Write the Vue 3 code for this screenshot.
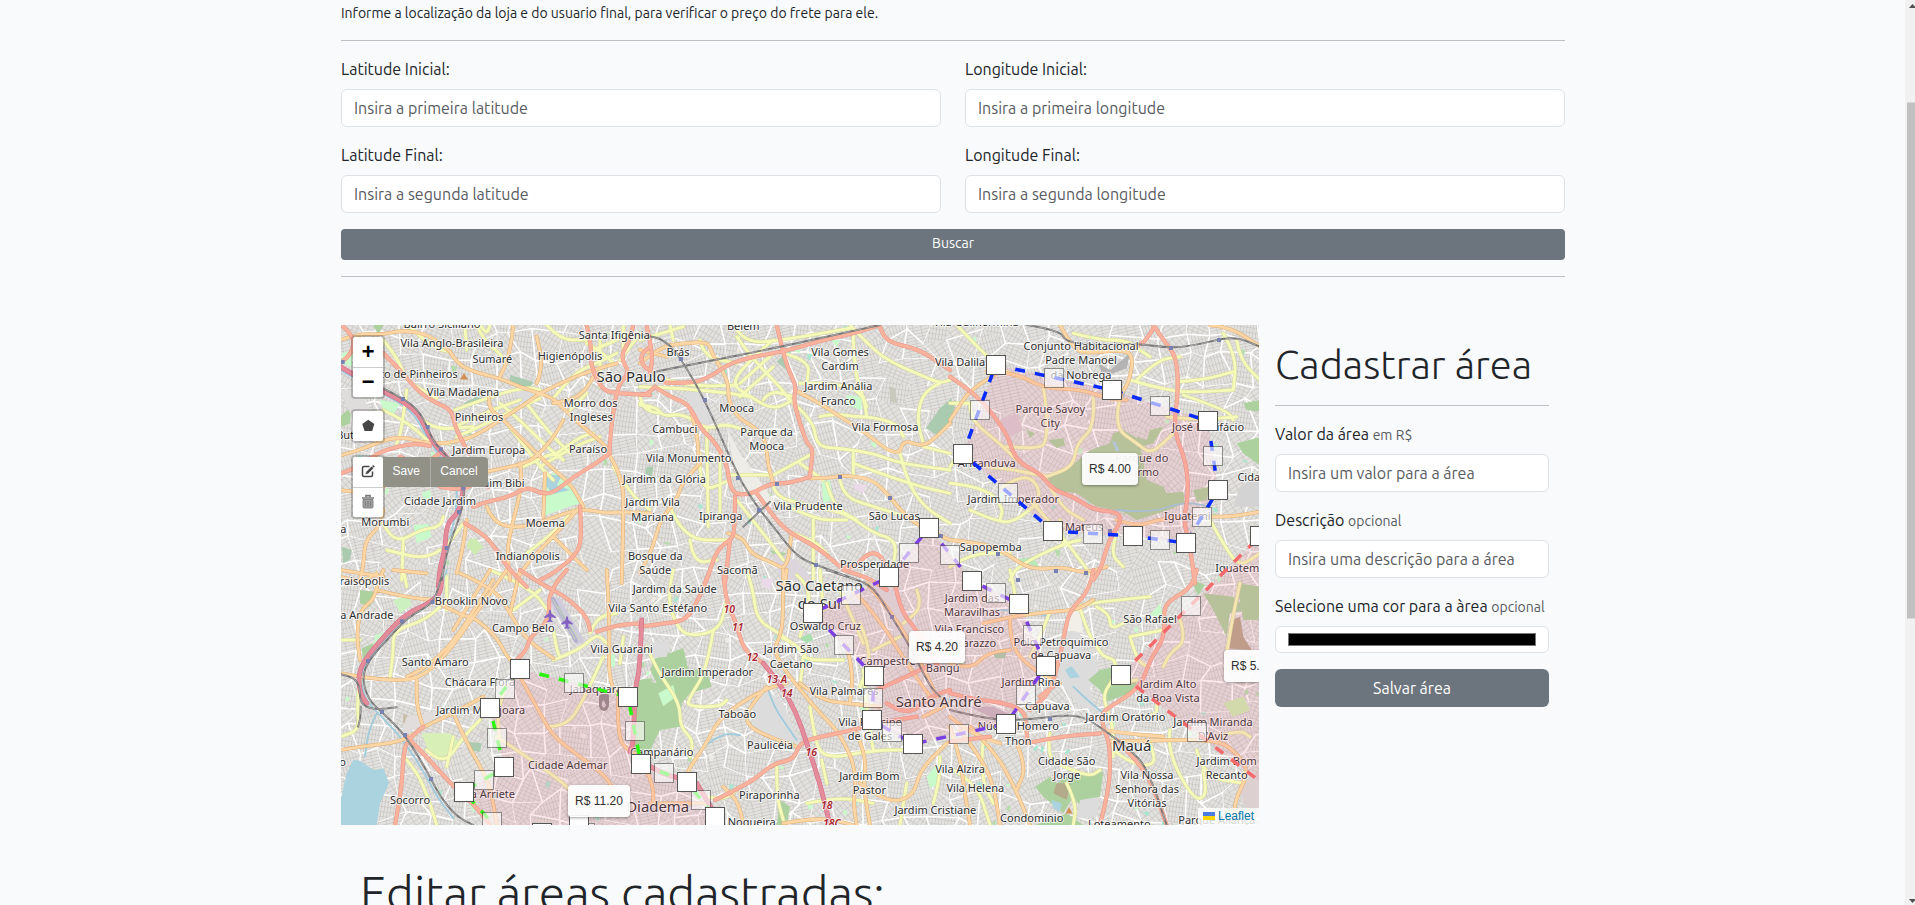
<script setup>
const origins = { A: [340, 320], B: [640, 320], C: [950, 320], D: [340, 570], E: [640, 570], F: [950, 570] }
const conv = (s, x, y) => [+(origins[s][0] + x / 3).toFixed(1), +(origins[s][1] + y / 3).toFixed(1)]
const points = (s, str) => str.trim().split(/\s+/).map((p) => conv(s, ...p.split(',').map(Number)))
const straight = (pts) => 'M' + pts.map((p) => p.join(' ')).join('L')
const smooth = (pts) => {
  let d = 'M' + pts[0].join(' ')
  for (let i = 1; i < pts.length - 1; i++) {
    const [a, b] = pts[i]
    const [c, e] = pts[i + 1]
    d += `Q${a} ${b} ${(a + c) / 2} ${(b + e) / 2}`
  }
  return d + 'L' + pts[pts.length - 1].join(' ')
}
const join = (groups) =>
  Object.entries(groups)
    .map(([s, lines]) => lines.split('|').map((l) => smooth(points(s, l))).join(''))
    .join('')

const trunk = join({
  A: '0,140 130,215 190,245 235,280 260,330 280,370 310,400 370,470 370,520 355,580 320,610 315,690 300,740 295,800',
  D: '300,0 310,50 280,95 200,130 140,190 80,260 55,310 60,370 80,400|905,150 900,300 885,350 880,520 870,545',
  E: '370,280 420,340 470,430 500,520 540,640 570,765|0,570 60,610 140,630|170,640 230,740'
})
const primary = join({
  A: '5,15 45,50 35,100 0,130|130,100 180,150 240,220 290,250 335,270 345,320 370,370 385,400|5,460 60,440 110,400 170,380 230,370 270,378|740,15 755,80 750,130 785,210 830,220 930,225|880,15 870,60 840,110 870,160 835,190 815,300 808,400|930,80 900,100 910,140 930,150|808,400 770,430 700,470 640,520 600,520 560,500 510,530 440,545 400,560|720,560 725,640 715,700 640,760 600,780|375,610 430,640 470,690 500,740 560,800|300,500 350,510 390,500 420,480 445,500|180,410 240,440 300,400',
  B: '77,188 160,190 210,170 270,130 340,110 430,95 530,65 640,40 720,15|410,15 425,80 445,150 470,200 460,240 480,310 500,370 520,385 510,465|50,205 90,230 140,250 160,280 185,330 225,365 260,430 270,500 290,525 340,520 390,490 450,490 510,470|285,530 285,640 270,660 230,690 200,780|350,520 400,590 450,640 530,680 600,740|720,20 730,50 760,70 840,90 900,130 930,150|20,20 40,100 30,160|0,225 20,225 45,200|600,740 640,750 680,700 720,700 740,750|270,660 255,790',
  C: '0,170 60,210 120,270 175,350 185,390 210,430 270,460 310,510 370,530 430,570 500,575 515,600 490,640 470,680 455,740 430,780|610,15 640,60 680,110 685,220 670,330 710,430 715,530 700,600 720,680 735,790|610,25 590,60 560,80',
  D: '250,470 200,510 190,560 185,650 165,765|200,500 260,560 330,640 400,700 450,765|540,0 600,40 640,60 690,90 740,140 750,180|680,0 625,60 630,150 570,200 560,240 520,280|770,185 830,165 905,160',
  E: '250,0 255,90 290,160 310,240 370,280|0,170 80,160 140,150 180,80 210,0|225,690 330,640 400,580 460,570 480,520 520,505 640,480 700,460 830,440|610,0 680,20 740,60|765,40 780,120 830,180 900,300|710,360 800,320 860,290|740,400 800,440 870,380 930,360',
  F: '430,0 420,60 360,120 345,180 330,260 300,370 240,420|740,0 730,50 660,90 640,120 645,200 600,270 580,330 545,370 480,410 455,430 460,480 480,520 480,640 450,765|0,370 80,390 150,395 220,420 230,460 230,520|0,515 120,500|230,520 320,500 450,490|500,510 580,590 620,680 650,765|270,380 320,340'
})
const secondary = join({
  A: '330,95 350,130 400,155 480,175 550,205 600,220 640,235 690,285 740,330 790,370 810,400|480,170 500,130 515,60 520,15|600,220 560,250 480,300 420,340 370,360 280,375 170,345 60,390 5,405|600,220 680,180 760,150 830,130|590,190 610,140 590,50|490,300 560,370 620,430 690,490 720,540 730,560|450,220 440,260 490,300|760,170 730,230 640,250|670,300 650,340 600,400 560,430 440,455|540,430 550,480 520,600 500,690 510,780|440,560 460,610 540,625 620,600 720,565 800,580 850,575 930,580|805,400 850,470 850,600 845,790|610,590 615,460|720,560 640,650 560,730 530,780|130,570 120,620 75,660 70,740 60,780|160,750 260,760|0,750 130,770|380,600 370,680 350,760|0,60 60,40 120,45 190,30 270,45 330,95|640,650 740,750|0,510 60,520 130,500',
  B: '0,130 60,80 130,70 205,65 215,100 265,180 265,240 290,290 340,320 375,350 385,440 400,490|465,210 540,250 600,290 680,340 740,390 780,400 790,360 850,380 890,350 930,310|510,475 560,475 620,465 700,480 740,520 790,580 840,620 930,660|180,430 130,480 110,540 60,600 40,680 0,760|265,640 310,650 330,700 400,730 440,750 455,640|155,280 175,360 175,430|440,750 435,790|0,90 80,110',
  C: '110,155 200,160 250,190 300,205 400,210 470,235 530,240|330,15 370,90 420,100 500,90 550,100 540,180 510,230|0,300 20,270 60,210 150,155|500,600 560,620 620,600 700,590 780,590 850,590 930,575|0,660 100,670 170,700 240,750 340,740 400,760 470,740|780,15 840,20 930,80',
  D: '280,90 370,140 400,140 470,200 500,260 540,300|360,10 470,60 510,130 560,210 640,265|500,0 400,140 330,240 240,330 120,330 0,310|540,320 600,430 640,500 720,560 800,620 830,680|0,540 60,530 190,515 250,470 340,430 430,380|110,60 190,80 280,90|130,0 110,50 100,90 60,120 50,200 60,270|800,0 810,150 805,350 860,390|250,470 230,420 230,330|340,430 380,520 450,640 470,765|835,380 830,500 870,550 930,560|200,320 300,280 460,30|450,0 340,180|0,20 60,40 110,10|540,0 510,130',
  E: '430,0 430,150 420,200 400,240 440,310 490,370 540,430 600,490 650,600 640,700 650,765|380,350 320,420 320,460 360,490 470,530|440,340 380,350 240,440 200,520 150,590 140,620|480,340 540,390 620,400 720,410|640,60 720,150 800,280 870,380|680,40 760,130 850,290 890,380|620,230 640,300 630,400|20,600 40,650 40,700|30,700 200,700|430,760 540,740 640,765|660,640 740,700 820,680 840,600 920,520|650,490 680,560 670,650 690,765|850,440 930,400|310,765 300,700 250,650',
  F: '100,160 180,140 300,125 380,120 430,90|180,150 180,230 250,300 330,340|0,280 60,300 110,250 180,240|0,470 30,560 40,640 60,765|30,480 90,560 130,640 150,765|60,470 130,540 190,640 240,765|480,515 620,510 800,510 850,540 900,600 850,700 860,765|200,520 230,590 200,660|460,480 520,490 640,500|0,440 60,490 150,520'
})
const tertiary = join({
  A: '130,60 170,110 200,180 230,200 290,235|130,270 190,300 240,340 270,370 330,370|200,210 185,330 170,370|205,15 250,60 300,90 330,95|380,90 375,20|410,15 430,60 480,100 500,130|345,270 450,230 560,200 600,210|345,320 430,280 540,240|350,350 420,320 520,270 600,235|500,310 540,360 600,440 640,480|560,250 620,330 690,400|480,250 540,300 620,380 670,420|650,400 720,350 760,340|600,440 700,380 780,350|740,70 760,80 800,110 820,130|760,90 830,60 870,40|640,235 700,160 770,130 830,100|130,610 150,650 190,660 240,630 300,620 310,590|190,660 185,780|820,440 870,520 930,570|900,250 930,270|560,700 640,640 700,570|310,690 370,610|420,15 440,45 450,15|620,15 660,60 740,60|240,290 270,330 400,320|550,440 610,410 650,400|780,60 780,200|300,690 260,720 140,690|690,270 740,220|850,15 850,100|900,40 840,120',
  B: '0,200 130,205 270,220 330,230|80,180 160,200 290,195|0,255 50,260 70,290 130,280 200,330 260,310 340,340|400,60 340,110 270,190 330,230 400,270 460,240|290,50 340,120 410,190 450,240|290,30 320,70 430,60 630,25|630,15 700,90 760,130 830,160 900,190 930,180|900,190 850,210 830,300 850,370|430,100 510,120 500,190|480,190 600,190 670,220 680,290|400,490 400,530 520,560 620,580 700,640 770,660 760,740|540,290 580,280 640,290 690,290 770,310 790,350|460,250 520,300 530,380 600,385 700,400 780,430 930,450|390,470 520,400|480,430 550,480|240,390 240,600|200,330 205,620|180,400 175,520 270,480|270,465 390,465|290,540 370,640 430,720|90,560 130,660 270,660|640,400 640,470|600,480 610,530 700,560 800,590|780,400 800,480 850,560 930,610|520,600 520,780|460,640 520,660 560,700|0,230 10,270 60,280|90,15 100,60|640,30 640,150 680,260|850,380 930,400|640,430 800,490 930,520|430,550 520,600 620,600|150,660 160,730 230,720|400,100 300,190|0,60 130,20|300,230 400,140|180,60 190,110 290,130|560,490 580,560 650,600|370,240 390,210 460,230',
  C: '20,15 100,100 170,160 240,180|280,200 290,260 290,370 260,385 170,380|430,235 435,320 380,370 370,440 290,470|510,235 490,320 560,370 600,400 640,370 680,330|60,250 60,300 150,370 220,440 290,470|290,470 200,450 110,440|290,480 330,560 400,600|540,180 660,215 760,215 850,210|820,40 860,110 850,210|680,185 760,180 850,155|560,180 620,120 690,110|700,225 830,270 850,300|0,490 100,500 160,560 150,600|240,540 330,640 420,760|60,570 150,610 200,600 250,560|390,660 340,670 200,740 180,780|500,640 480,700 520,740|780,600 830,690 870,740 930,700|160,500 220,460 270,500 260,560|370,40 450,60 520,60 560,80|860,60 870,120 930,180|0,250 60,250|30,400 0,440|540,70 600,110|650,290 740,300 860,290|330,600 340,670|0,740 60,700 180,700',
  D: '60,330 50,400 60,480 0,500|300,110 260,150 160,180 160,250 150,320|450,0 570,50 630,130|640,270 720,240 770,190 800,220|640,180 650,240 660,260|190,560 230,600 270,700 290,765|260,540 310,590 370,500 420,450|620,470 680,470 730,390 790,260|470,500 560,560 660,630 720,690|500,340 470,420 480,520|850,200 840,280|750,190 770,140 830,130|0,210 60,210|320,120 320,20|520,120 600,60|320,590 340,500|190,0 200,50',
  E: '100,0 80,80 110,170 150,200 240,180 260,90|320,0 340,60 350,150 420,190 480,240|220,180 200,300 150,380 140,410 240,410 260,390|20,230 50,300 120,400 120,470 160,510 150,560|420,200 500,240 490,270 610,270|490,260 480,350|510,410 520,480 545,570 700,540 830,540|545,570 560,640|410,590 410,680 430,750|660,160 700,250 660,350|470,15 500,40 510,100 480,200|830,60 850,110 790,160|300,650 260,690 200,680|670,300 680,420 700,540|900,560 900,620 880,700|800,640 780,765|500,700 600,680 700,700|700,240 780,200|600,60 670,220|540,0 550,120',
  F: '390,115 410,180 440,230 460,260 500,270 490,330 460,370 470,420 490,470 490,560|440,110 480,130 480,180 540,150|540,200 560,270 590,290|380,110 420,100 500,90 600,80|640,180 540,200|300,125 270,200 240,260|180,0 200,80 190,140|560,440 620,440 620,400|600,520 620,570 590,590 530,570 490,540|660,480 650,540 730,690 770,680 760,600|740,540 760,620 880,640|870,40 850,130 830,250|690,150 710,210 660,250 640,290|300,490 290,560 340,590 420,620 450,600|100,500 90,620 130,700|10,600 80,640 120,765|350,640 380,700 370,765|500,340 560,330|800,500 870,480 900,500'
})
const rail = join({
  A: '130,205 190,235 235,270 262,320 280,365 305,390 360,460 375,520 360,590 340,640 320,700 305,780',
  B: '45,155 200,125 400,85 560,50 720,15|0,45 50,50 90,75 125,120 195,240 290,460 340,545 400,620 470,710 530,735 650,780|310,620 390,545',
  D: '310,0 290,75 270,105 200,145 150,200 90,265 65,320 85,390 130,430 200,500 270,620 300,680 350,740 400,765|0,312 40,320 60,350 60,400 100,420 170,412|62,410 62,440 54,470',
  C: '230,15 330,30 350,70 480,75 560,70 660,85 740,75 820,55 870,55 930,80',
  E: '560,0 640,25 700,50 755,140 810,230 870,350 900,380',
  F: '0,420 120,450 230,450 340,435 400,440 450,470 540,540 590,590 650,765'
})
const streams = join({
  A: '0,150 130,222 185,252 228,290 250,335 300,410 350,470 350,560 335,640 310,700 300,780',
  D: '320,0 300,60 270,95 195,140 145,195 85,265 60,320 75,390 125,440 190,510 260,620 290,680 340,745|110,430 85,480 75,560',
  E: '385,360 400,410 470,510|180,540 240,490 300,495',
  F: '370,350 400,380 460,430|150,120 240,125 300,140',
  C: '500,570 600,580 700,545 780,560|520,230 550,130'
})

const areas = [
  ['#c8facc', 'A', '610,588 615,470 650,455 690,480 722,548'], ['#aad3df', 'A', '620,462 665,468 650,495 690,510 640,522 620,500'],
  ['#aacbaf', 'A', '510,165 580,185 570,205 510,190'], ['#c8facc', 'A', '5,100 40,90 35,140 5,130'],
  ['#c8facc', 'A', '120,240 180,250 160,285 130,270'], ['#c8facc', 'A', '220,615 265,612 275,650 230,670'],
  ['#cdebb0', 'A', '385,660 405,655 430,680 405,705 380,680'], ['#aacbaf', 'A', '5,680 35,690 30,720 10,730'],
  ['#add19e', 'A', '0,290 35,260 30,310 5,320'], ['#c8facc', 'A', '245,520 270,510 275,530 255,545'],
  ['#aacbaf', 'A', '370,250 410,230 440,240 400,255'], ['#dfdddc', 'A', '0,210 60,215 90,270 30,280'],
  ['#dcdcdc', 'A', '530,215 590,205 560,250 530,250'], ['#add19e', 'A', '100,15 130,15 115,45'],
  ['#aacbaf', 'B', '858,325 900,265 935,235 935,305 890,345'], ['#aacbaf', 'B', '430,105 445,155 410,125'],
  ['#c8facc', 'B', '545,485 570,480 580,540 550,550'], ['#c8facc', 'B', '620,225 665,230 665,270 620,255'],
  ['#c8facc', 'B', '575,60 600,60 590,85'], ['#c9c8bd', 'B', '750,200 765,205 772,250 750,245'],
  ['#eeece6', 'B', '262,330 300,400 400,540 380,570 330,520 280,430'], ['#dcdcdc', 'B', '130,220 190,210 225,300 190,320'],
  ['#aacbaf', 'B', '20,440 40,440 35,470 15,460'], ['#add19e', 'B', '390,690 440,700 410,720'],
  ['#dcd6dc', 'B', '400,700 470,720 520,780 420,780'], ['#ebdbe8', 'B', '640,490 680,495 670,520 645,510'],
  ['#add19e', 'C', '290,475 350,450 420,390 480,370 490,340 520,330 570,360 575,400 590,480 640,500 650,520 700,515 705,550 640,575 560,600 520,575 440,560 380,520 330,515'],
  ['#aad3df', 'C', '487,362 497,365 508,392 498,395'], ['#add19e', 'C', '860,370 935,350 935,440 880,400'],
  ['#add19e', 'C', '730,510 780,500 770,540 740,545'], ['#aacbaf', 'C', '0,245 15,250 8,290 0,290'],
  ['#add19e', 'C', '295,360 340,355 345,375 320,385'], ['#add19e', 'C', '230,330 255,340 240,355'],
  ['#b4b3b3', 'C', '445,130 480,150 540,100 530,145 490,160 455,158'], ['#d4d3d3', 'C', '850,560 870,500 935,460 935,560'],
  ['#dacbd2', 'C', '150,300 200,280 220,330 180,350'], ['#b9e8b6', 'C', '170,710 200,718 250,712 270,745 220,725'],
  ['#add19e', 'C', '880,250 930,240 935,275 890,270'], ['#add19e', 'C', '560,350 590,360 600,330 640,320 610,370 570,380'],
  ['#add19e', 'D', '65,235 100,220 95,260 70,280'], ['#d8f0b8', 'D', '245,490 330,490 360,520 300,570 265,545'],
  ['#cdf0c0', 'D', '160,90 205,75 215,105 180,130'], ['#c8facc', 'D', '105,195 140,185 130,220 100,230'],
  ['#aacbaf', 'D', '385,515 425,520 420,545 385,540'], ['#add19e', 'D', '895,330 935,325 935,550 885,540'],
  ['#cfcbdc', 'D', '628,80 660,85 735,215 712,225 640,120'], ['#c8facc', 'D', '805,255 825,250 825,290 805,290'],
  ['#aad3df', 'D', '40,570 60,572 100,600 130,595 147,640 120,700 110,765 0,765 0,700 20,610'],
  ['#c7bba4', 'D', '190,430 220,450 210,470 190,460'], ['#c8facc', 'D', '370,660 415,700 400,730'],
  ['#add19e', 'D', '60,60 105,65 90,110 60,100'], ['#e0dddc', 'D', '200,440 330,420 180,500'],
  ['#add19e', 'E', '-10,330 50,340 30,300 45,265 130,235 145,300 200,300 215,350 150,370 125,400 120,470 60,480 30,540 -20,550'],
  ['#c8facc', 'E', '55,370 100,345 108,380 70,408'], ['#a9dfae', 'E', '478,205 510,190 520,210 500,220'],
  ['#c8facc', 'E', '860,620 890,580 900,640 870,655'], ['#add19e', 'E', '420,690 450,710 440,765 410,765'],
  ['#dcdcdc', 'E', '345,370 380,360 430,400 480,520 400,500 335,470'], ['#ebdbe8', 'E', '365,25 400,25 390,60 365,50'],
  ['#dcdcdc', 'E', '20,220 90,210 80,260 30,265'], ['#dcdcdc', 'E', '700,40 760,60 830,200 780,230'],
  ['#dcdcdc', 'F', '340,180 390,190 400,250 440,260 450,330 420,350 440,430 380,400 325,330'],
  ['#f2efe9', 'F', '350,120 390,120 400,190 350,180'],
  ['#add19e', 'F', '415,330 450,300 500,290 560,340 540,370 470,395 450,360'], ['#add19e', 'F', '730,30 765,45 745,75 735,60'],
  ['#add19e', 'F', '760,70 850,80 890,120 840,130 830,200 790,120'], ['#c8facc', 'F', '600,135 630,100 640,145'],
  ['#aacbaf', 'F', '130,250 170,245 165,265 135,265'],
  ['#add19e', 'F', '255,650 300,620 320,640 350,620 460,605 450,680 400,720 370,680 340,730 280,680'],
  ['#add19e', 'F', '255,765 350,730 400,765'], ['#add19e', 'F', '860,40 935,50 935,150 880,150'],
  ['#cdebb0', 'F', '820,400 880,380 900,420 850,440'], ['#b8a58a', 'F', '845,150 870,140 880,200 905,240 830,235'],
  ['#b3ab8b', 'F', '320,640 362,640 350,690 310,670'], ['#dcdcdc', 'F', '390,690 450,680 440,740 380,745'],
  ['#aad3df', 'F', '345,300 365,288 390,322 360,325'], ['#aad3df', 'F', '305,690 335,700 330,725 310,715'],
  ['#c8b8c4', 'F', '60,410 130,410 220,450 140,450'], ['#dcd0d0', 'F', '860,640 935,600 935,720 890,720']
].map(([fill, s, p]) => ({ fill, d: straight(points(s, p)) + 'Z' }))

/* Residential blocks: jittered cells, each hatched with a differently rotated street pattern */
let seed = 7
const rnd = () => ((seed = (seed * 16807) % 2147483647) / 2147483647)
const cell = 23
const grid = Array.from({ length: 25 }, (_, j) =>
  Array.from({ length: 43 }, (_, i) => [332 + i * cell + (rnd() - 0.5) * 17, 314 + j * cell + (rnd() - 0.5) * 17].map((n) => +n.toFixed(1)))
)
const patterns = [8, 31, 58, 77, 112, 140, 164].map((angle, i) => ({ id: 'st' + i, angle, w: 3.2 + (i % 3) * 0.5, h: 5 + (i % 4) }))
const blocks = []
for (let j = 0; j < 24; j++)
  for (let i = 0; i < 42; i++)
    blocks.push({
      d: straight([grid[j][i], grid[j][i + 1], grid[j + 1][i + 1], grid[j + 1][i]]) + 'Z',
      fill: `url(#st${Math.floor(rnd() * 7)})`,
      edge: rnd() > 0.4
    })
const specks = Array.from({ length: 190 }, () => {
  const x = 341 + rnd() * 918
  const y = 325 + rnd() * 500
  return { d: `M${x} ${y}l${2 + rnd() * 5} ${rnd() * 2}l${-rnd() * 3} ${2 + rnd() * 4}l-3 -1z`, fill: ['#c8facc', '#b6dcae', '#a9e6cf', '#eeece4', '#d3cfd0'][Math.floor(rnd() * 5)] }
})
const stations = [['A', 8, 126], ['A', 189, 237], ['A', 263, 321], ['A', 303, 388], ['A', 370, 505], ['A', 357, 576], ['A', 320, 684], ['B', 123, 117], ['B', 195, 240], ['B', 294, 474], ['B', 357, 570], ['B', 411, 492], ['B', 600, 471], ['B', 750, 534], ['B', 528, 735], ['B', 903, 648], ['C', 663, 84], ['C', 807, 60], ['C', 480, 633], ['C', 318, 753], ['C', 144, 702], ['C', 408, 759], ['D', 278, 96], ['D', 186, 154], ['D', 84, 273], ['D', 126, 426], ['D', 195, 495], ['D', 273, 627], ['E', 756, 141], ['F', 300, 447], ['F', 204, 30]].map(([s, x, y]) => conv(s, x, y))

const label = (s, rows) => rows.map(([x, y, t]) => { const [a, b] = conv(s, x, y); return { x: a, y: b, t } })
const labels = [
  ...label('A', [[306, 25, 'Bairro Siciliano'], [336, 80, 'Vila Anglo-Brasileira'], [457, 130, 'Sumaré'], [690, 120, 'Higienópolis'], [823, 57, 'Santa Ifigênia'], [222, 174, 'Alto de Pinheiros'], [369, 227, 'Vila Madalena'], [752, 262, 'Morro dos'], [754, 304, 'Ingleses'], [417, 303, 'Pinheiros'], [50, 358, 'Butantã'], [446, 402, 'Jardim Europa'], [744, 400, 'Paraíso'], [480, 502, 'Itaim Bibi'], [300, 556, 'Cidade Jardim'], [136, 617, 'Morumbi'], [6, 638, 'ia'], [616, 622, 'Moema'], [563, 721, 'Indianópolis']]),
  ...label('B', [[310, 30, 'Belém'], [114, 107, 'Brás'], [600, 107, 'Vila Gomes'], [600, 150, 'Cardim'], [595, 211, 'Jardim Anália'], [595, 254, 'Franco'], [290, 276, 'Mooca'], [104, 340, 'Cambuci'], [735, 334, 'Vila Formosa'], [380, 349, 'Parque da'], [380, 391, 'Mooca'], [146, 425, 'Vila Monumento'], [73, 489, 'Jardim da Glória'], [38, 559, 'Jardim Vila'], [38, 602, 'Mariana'], [242, 600, 'Ipiranga'], [504, 570, 'Vila Prudente'], [763, 601, 'São Lucas'], [46, 720, 'Bosque da'], [46, 762, 'Saúde'], [292, 762, 'Sacomã'], [704, 743, 'Prosperidade']]),
  ...label('C', [[78, 18, 'Vila Guilhermina'], [30, 139, 'Vila Dalila'], [393, 91, 'Conjunto Habitacional'], [393, 133, 'Padre Manoel'], [393, 176, 'da Nobrega'], [301, 280, 'Parque Savoy'], [301, 322, 'City'], [774, 334, 'José Bonifácio'], [110, 442, 'Aricanduva'], [575, 427, 'Parque do'], [575, 469, 'Carmo'], [1002, 483, 'Cidade Tiradentes'], [190, 550, 'Jardim Imperador'], [370, 634, 'São Mateus'], [712, 600, 'Iguatemi'], [122, 693, 'Sapopemba'], [866, 756, 'Iguatemi']]),
  ...label('D', [[54, 46, 'Paraisópolis'], [394, 105, 'Brooklin Novo'], [62, 146, 'Vila Andrade'], [550, 187, 'Campo Belo'], [845, 250, 'Vila Guarani'], [286, 288, 'Santo Amaro'], [420, 347, 'Chácara Flora'], [768, 368, 'Jabaquara'], [422, 432, 'Jardim Marajoara'], [683, 597, 'Cidade Ademar'], [440, 683, 'Vila Arriete'], [210, 702, 'Socorro'], [8, 587, 'o'], [965, 557, 'Campanário'], [953, 125, 'Vila Santo Estéfano']]),
  ...label('E', [[104, 68, 'Jardim da Saúde'], [556, 180, 'Oswaldo Cruz'], [454, 250, 'Jardim São'], [454, 293, 'Caetano'], [202, 317, 'Jardim Imperador'], [612, 375, 'Vila Palmares'], [743, 286, 'Campestre'], [908, 306, 'Bangú'], [292, 445, 'Taboão'], [690, 468, 'Vila Príncipe'], [690, 510, 'de Gales'], [390, 537, 'Paulicéia'], [688, 630, 'Jardim Bom'], [688, 671, 'Pastor'], [388, 686, 'Piraporinha'], [335, 767, 'Nogueira'], [960, 610, 'Vila Alzira'], [886, 733, 'Jardim Cristiane']]),
  ...label('F', [[66, 95, 'Jardim das'], [66, 138, 'Maravilhas'], [58, 190, 'Vila Francisco'], [58, 231, 'Matarazzo'], [333, 227, 'Polo Petroquímico'], [333, 268, 'de Capuava'], [243, 348, 'Jardim Rina'], [292, 420, 'Capuava'], [205, 481, 'Núcleo Homero'], [205, 524, 'Thon'], [600, 160, 'São Rafael'], [654, 354, 'Jardim Alto'], [654, 395, 'da Boa Vista'], [526, 452, 'Jardim Oratório'], [789, 468, 'Jardim Miranda'], [789, 510, "D'Aviz"], [76, 665, 'Vila Helena'], [350, 584, 'Cidade São'], [350, 627, 'Jorge'], [591, 626, 'Vila Nossa'], [591, 668, 'Senhora das'], [591, 710, 'Vitórias'], [830, 585, 'Jardim Bom'], [830, 627, 'Recanto'], [245, 756, 'Condominio'], [508, 775, 'Loteamento'], [800, 762, 'Parque Aliança']])
]
const cities = label('E', [[538, 62, 'São Caetano'], [538, 117, 'do Sul'], [-27, -563, 'São Paulo'], [53, 727, 'Diadema'], [896, 412, 'Santo André'], [1475, 542, 'Mauá']])
const exits = label('E', [[268, 128, '10'], [293, 183, '11'], [337, 272, '12'], [410, 340, '13 A'], [440, 382, '14'], [514, 558, '16'], [560, 716, '18'], [576, 770, '18C']])

const zones = [
  { color: '#0a2bff', s: 'C', v: '137,135 486,210 774,303 804,510 708,669 549,648 309,633 39,402', m: '312,174 630,258 789,408 756,591 630,660 429,642 174,519 90,270' },
  { color: '#7b3fe4', s: 'E', v: '867,-126 996,33 1137,102 1218,288 1098,462 819,522 696,450 702,318 518,129 747,21', m: '807,-51 930,-45 1068,69 1179,195 1158,375 957,492 756,487 699,384 612,225 633,75' },
  { color: '#2bf50f', s: 'D', v: '540,297 864,381 903,582 1041,636 1125,741 1110,850 717,766 606,789 540,850 372,666 492,591 450,414', m: '702,339 885,483 972,609 1083,690 495,357 471,504 432,630 456,755 735,789' },
  { color: '#f46a6c', s: 'F', v: '513,315 930,-102 1100,-102 1100,765', m: '723,108 741,486' }
].map((z) => {
  const v = points(z.s, z.v)
  return { color: z.color, v, m: points(z.s, z.m), d: straight(v) + 'Z' }
})
const prices = [['R$ 4.00', 741, 128], ['R$ 4.20', 568, 306], ['R$ 11.20', 227, 460], ['R$ 5.00', 883, 325]]
const fields = [
  ['Latitude Inicial:', 'Insira a primeira latitude'], ['Longitude Inicial:', 'Insira a primeira longitude'],
  ['Latitude Final:', 'Insira a segunda latitude'], ['Longitude Final:', 'Insira a segunda longitude']
]
</script>

<template>
  <div class="page">
    <main class="container">
      <p class="intro">Informe a localização da loja e do usuario final, para verificar o preço do frete para ele.</p>
      <hr />
      <form class="search">
        <label v-for="[l, p] in fields" :key="l" class="field"><span>{{ l }}</span><input type="text" :placeholder="p" /></label>
      </form>
      <button class="btn small">Buscar</button>
      <hr />
      <section class="areas">
        <div class="map">
          <svg class="tiles" viewBox="341 325 918 500" width="918" height="500">
            <defs>
              <pattern v-for="p in patterns" :id="p.id" :key="p.id" :width="p.w" :height="p.h" patternUnits="userSpaceOnUse" :patternTransform="`rotate(${p.angle})`">
                <rect :width="p.w" :height="p.h" fill="#e2e1de" />
                <path :d="`M0 0H${p.w}M0 0V${p.h}`" stroke="#c0beba" stroke-width="1" />
              </pattern>
            </defs>
            <rect x="341" y="325" width="918" height="500" fill="#e4e2de" />
            <path v-for="(b, i) in blocks" :key="'b' + i" :d="b.d" :fill="b.fill" :stroke="b.edge ? '#fff' : 'none'" stroke-width="1.4" />
            <path v-for="(a, i) in specks" :key="'s' + i" :d="a.d" :fill="a.fill" />
            <path v-for="(a, i) in areas" :key="'a' + i" :d="a.d" :fill="a.fill" stroke-linejoin="round" />
            <g fill="none" stroke-linecap="round" stroke-linejoin="round">
              <path :d="streams" stroke="#9fcbdc" stroke-width="1.8" />
              <path :d="tertiary" stroke="#d3d69c" stroke-width="3.9" />
              <path :d="tertiary" stroke="#f6fab8" stroke-width="2.9" />
              <path :d="secondary" stroke="#e2ad72" stroke-width="3.8" />
              <path :d="secondary" stroke="#fcd6a4" stroke-width="2.8" />
              <path :d="primary" stroke="#e8968a" stroke-width="4.2" />
              <path :d="primary" stroke="#f9b29c" stroke-width="3.2" />
              <path :d="trunk" stroke="#d4708c" stroke-width="4.8" />
              <path :d="trunk" stroke="#e58c9b" stroke-width="3.6" />
              <path :d="rail" stroke="#767676" stroke-width="1.9" />
              <path :d="rail" stroke="#bdbdbd" stroke-width="0.7" stroke-dasharray="7 5" />
              <path d="M553 599 576 641" stroke="#b4b1cf" stroke-width="4" />
              <path d="M553 600 575 639M558 606 580 640" stroke="#c6d8b6" stroke-width="1" />
            </g>
            <rect v-for="(p, i) in stations" :key="'t' + i" :x="p[0] - 2" :y="p[1] - 2" width="4" height="4" fill="#7981b0" />
            <path d="M464 373l4 6.500h-8zM1069 807l3.500 6.500h-7z" fill="#d08f55" />
            <g fill="#8461c4">
              <path id="plane" d="M549.200 610h1.600l.6 3.500 4.300 3.200v1.500l-4.300-1.300-.3 3.200 1.500 1.200v1l-2.600-.6-2.600.6v-1l1.500-1.200-.3-3.200-4.300 1.300v-1.500l4.300-3.200z" />
              <use href="#plane" x="17" y="6.500" />
            </g>
            <path d="M599 697q0-3 4-3h5q1 0 1 3v8q-1 6-5 6-5-1-5-6z" fill="#918a8c" />
            <path d="M603 700q5 5 1 8-4-2-1-8z" fill="#d8ced2" />
            <g class="names">
              <text v-for="(l, i) in labels" :key="'l' + i" :x="l.x" :y="l.y">{{ l.t }}</text>
              <g class="big"><text v-for="l in cities" :key="l.t" :x="l.x" :y="l.y">{{ l.t }}</text></g>
              <g class="exit"><text v-for="l in exits" :key="l.t" :x="l.x" :y="l.y">{{ l.t }}</text></g>
            </g>
            <path v-for="z in zones" :key="z.color" :d="z.d" fill="#f0708c" fill-opacity="0.15" :stroke="z.color" stroke-width="3.5" stroke-dasharray="10 10" />
            <g stroke="#555" fill="#fff">
              <template v-for="z in zones" :key="z.color">
                <rect v-for="(p, i) in z.m" :key="'m' + i" class="mid" :x="Math.round(p[0]) - 9.500" :y="Math.round(p[1]) - 9.500" width="19" height="19" />
                <rect v-for="(p, i) in z.v" :key="'v' + i" :x="Math.round(p[0]) - 9.500" :y="Math.round(p[1]) - 9.500" width="19" height="19" />
              </template>
            </g>
          </svg>
          <span v-for="[t, x, y] in prices" :key="t" class="price" :style="{ left: x + 'px', top: y + 'px' }">{{ t }}</span>
          <div class="controls">
            <div class="bar"><a class="zoom">+</a><a class="zoom">−</a></div>
            <div class="bar draw">
              <a><svg width="30" height="30"><path d="M15.200 8.700 21.300 13 19.200 20H11.600L9.300 13.100z" fill="#464646" /></svg></a>
            </div>
            <div class="edit">
              <div class="bar">
                <a><svg width="30" height="30" fill="none" stroke="#464646"><path d="M16.500 9.500H11Q9.500 9.500 9.500 11v7q0 1.500 1.500 1.500h7q1.500 0 1.500-1.500V14.500" stroke-width="1.500" /><path d="M14 15.800 19.500 10.300" stroke-width="2.600" /><path d="M20 9.800 21 8.800" stroke-width="2.600" /><path d="M12.500 17.300 13 15 15 16.800z" fill="#464646" stroke="none" /></svg></a>
                <a><svg width="30" height="30"><path d="M10 11.500h10V19q0 1-1 1h-8q-1 0-1-1z" fill="#a0a0a0" stroke="#777" stroke-width=".8" /><path d="M12.500 13v5.500M15 13v5.500M17.500 13v5.500" stroke="#777" stroke-width=".8" /><path d="M9 10h12M13 9V7.600h4V9" fill="none" stroke="#777" stroke-width="1.600" /></svg></a>
              </div>
              <div class="actions"><a>Save</a><a>Cancel</a></div>
            </div>
          </div>
          <div class="attribution">
            <svg width="12" height="8"><path fill="#4c7be1" d="M0 0h12v4H0z" /><path fill="#ffd500" d="M0 4h12v4H0z" /></svg> Leaflet
          </div>
        </div>
        <aside class="side">
          <h1>Cadastrar área</h1>
          <hr />
          <label class="field"><span>Valor da área <small>em R$</small></span><input type="text" placeholder="Insira um valor para a área" /></label>
          <label class="field"><span>Descrição <small>opcional</small></span><input type="text" placeholder="Insira uma descrição para a área" /></label>
          <label class="field"><span>Selecione uma cor para a àrea <small>opcional</small></span><i class="color"><b></b></i></label>
          <button class="btn">Salvar área</button>
        </aside>
      </section>
      <h2>Editar áreas cadastradas:</h2>
    </main>
    <div class="scrollbar">
      <svg width="10" height="905"><path d="M2 102.500h10v516H2z" fill="#c1c1c1" /><path d="M4 8h7L7.500 4zM4 899h7l-3.500 4z" fill="#505050" /></svg>
    </div>
  </div>
</template>

<style>
html, body { overflow: hidden; background: #f8fafc; }
</style>
<style scoped>
.page { display: flex; justify-content: space-between; height: 905px; overflow: hidden; background: #f8fafc; color: #212529; font: 16px/24px Ubuntu, "Noto Sans", sans-serif; }
.container { width: 1224px; margin-left: 341px; }
.intro { margin: 3px 0 0; font-size: 14px; line-height: 21px; }
hr { height: 1px; margin: 16px 0; border: 0; background: #bdbfc2; }
.search { display: grid; grid-template-columns: 600px 600px; gap: 16px 24px; }
.field { display: grid; gap: 8px; }
.field span { height: 24px; white-space: nowrap; }
.field small { font-size: 14px; line-height: 14px; color: #595c5f; }
input { box-sizing: border-box; width: 100%; height: 38px; padding: 6px 12px; border: 1px solid #dee2e6; border-radius: 6px; background: #fff; font: inherit; outline: 0; }
input::placeholder { color: #595c5f; opacity: 1; }
.btn { display: block; width: 100%; height: 38px; padding: 0; border: 0; border-radius: 6px; background: #6c757d; color: #fff; font: inherit; }
.btn.small { height: 31px; margin-top: 16px; padding-bottom: 2px; border-radius: 4px; font-size: 14px; line-height: 21px; }
.areas { display: flex; gap: 16px; margin-top: 48px; }
.map { position: relative; width: 918px; height: 500px; overflow: hidden; font: 12px/18px "Liberation Sans", sans-serif; }
.tiles { display: block; }
.names { font: 11px "Noto Sans", sans-serif; text-anchor: middle; fill: #2d2d2d; stroke: rgba(255, 255, 255, 0.75); stroke-width: 2px; paint-order: stroke; stroke-linejoin: round; }
.big { font-size: 14.9px; }
.exit { font-size: 10.5px; font-style: italic; font-weight: 600; fill: #a5252f; }
.mid { opacity: 0.6; }
.price { position: absolute; box-sizing: border-box; height: 32px; padding: 6px; border: 1px solid #fff; border-radius: 3px; background: #fff; color: #222; white-space: nowrap; box-shadow: 0 1px 3px rgba(0, 0, 0, 0.4); opacity: 0.92; }
.controls { position: absolute; left: 10px; top: 10px; display: grid; justify-items: start; }
.bar { width: 30px; border: 2px solid rgba(0, 0, 0, 0.2); border-radius: 4px; background: #fff; background-clip: padding-box; }
.bar a { display: block; height: 30px; line-height: 30px; text-align: center; color: #000; }
.bar a + a { height: 29px; border-top: 1px solid #ccc; }
.bar svg { display: block; }
.bar .zoom { font: bold 22px/34px "Liberation Mono", monospace; }
.bar .zoom + .zoom { line-height: 32px; }
.draw { margin: 10px 0 12px; }
.edit { display: flex; }
.actions { display: flex; height: 30px; margin: 2px 0 0 -2px; z-index: 1; }
.actions a { padding: 0 10px 0 9.500px; background: #919187; color: #fff; line-height: 29px; }
.actions a + a { border-left: 1px solid #aaa; border-radius: 0 4px 4px 0; }
.attribution { position: absolute; right: 0; bottom: 0; padding: 0 5px; background: rgba(255, 255, 255, 0.8); color: #0078a8; line-height: 17px; }
.side { width: 274px; padding-top: 16px; }
h1 { margin: 0; font-size: 40px; font-weight: 300; line-height: 48px; white-space: nowrap; }
.side .field { margin-bottom: 16px; }
.color { display: block; box-sizing: border-box; height: 27px; padding: 6px 12px; border: 1px solid #dee2e6; border-radius: 6px; background: #fff; }
.color b { display: block; box-sizing: border-box; height: 13px; border: 1px solid #777; background: #000; }
h2 { margin: 38px 0 0 19px; font-size: 48px; font-weight: 300; line-height: 58px; white-space: nowrap; }
.scrollbar { width: 10px; background: #f1f1f1; }
</style>
